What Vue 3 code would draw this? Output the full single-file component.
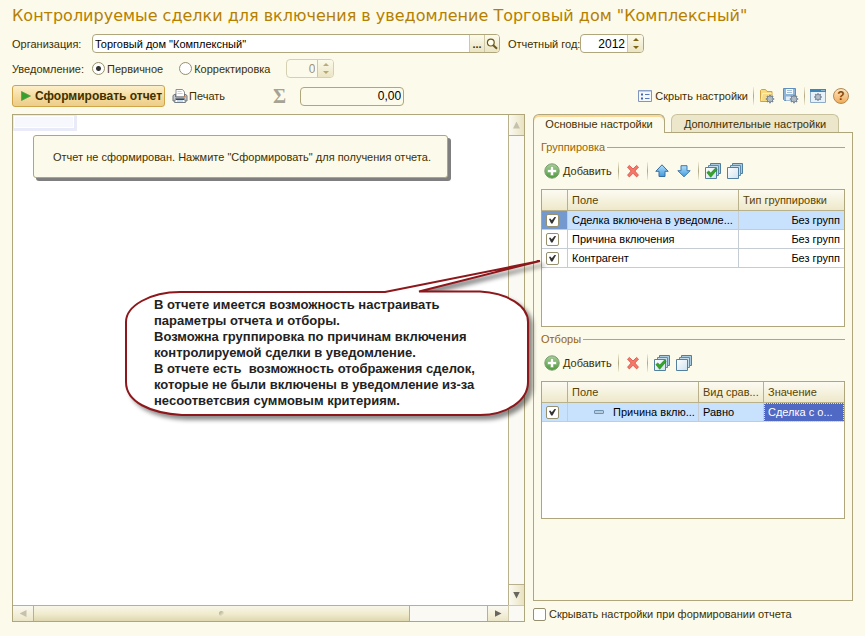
<script setup>
import { ref } from 'vue'

const organization = ref('Торговый дом "Комплексный"')
const year = ref('2012')
const noticeKind = ref('primary')
const correctionNumber = ref('0')
const total = ref('0,00')
const hideSettings = ref(false)

const groups = ref([
  { on: true, field: 'Сделка включена в уведомле...', type: 'Без групп' },
  { on: true, field: 'Причина включения', type: 'Без групп' },
  { on: true, field: 'Контрагент', type: 'Без групп' },
])
const filters = ref([
  { on: true, field: 'Причина вклю...', compare: 'Равно', value: 'Сделка с о...' },
])
</script>

<template>
  <svg class="sprite" aria-hidden="true">
    <defs>
      <linearGradient id="gGreen" x1="0" y1="0" x2="0" y2="1">
        <stop offset="0" stop-color="#a9cf9b" /><stop offset="1" stop-color="#4c9a3a" />
      </linearGradient>
      <linearGradient id="gBlue" x1="0" y1="0" x2="0" y2="1">
        <stop offset="0" stop-color="#b4e0fb" /><stop offset="1" stop-color="#3f9ade" />
      </linearGradient>
      <linearGradient id="gPage" x1="0" y1="0" x2="1" y2="1">
        <stop offset="0" stop-color="#ffffff" /><stop offset="1" stop-color="#cfe2ef" />
      </linearGradient>
      <symbol id="add" viewBox="0 0 16 16">
        <circle cx="8" cy="8" r="7.2" fill="url(#gGreen)" stroke="#7d9c72" />
        <path d="M6.5 3.5h3v3h3v3h-3v3h-3v-3h-3v-3h3z" fill="#fff" stroke="#6aa55a" stroke-width=".5" />
      </symbol>
      <symbol id="remove" viewBox="0 0 16 16">
        <path d="M2.5 4.2 4.4 2.4 8 6l3.6-3.6 1.9 1.8L9.9 8l3.6 4.2-1.9 1.7L8 10.2l-3.6 3.7-1.9-1.7L6.1 8z" fill="#f4776a" stroke="#d94f42" stroke-width=".8" />
      </symbol>
      <symbol id="up" viewBox="0 0 16 16">
        <path d="M8 1.8 14.2 8.3H11v5.2H5V8.3H1.8z" fill="url(#gBlue)" stroke="#3b6f9f" stroke-linejoin="round" />
      </symbol>
      <symbol id="down" viewBox="0 0 16 16">
        <path d="M8 13.8 14.2 7.7H11v-5H5v5H1.8z" fill="url(#gBlue)" stroke="#3f78ab" stroke-linejoin="round" />
      </symbol>
      <symbol id="pages" viewBox="0 0 16 16">
        <path d="M5.5.5h10v10h-10z" fill="#a9cbe0" stroke="#4f7f9f" />
        <path d="M3.5 2.5h10v10h-10z" fill="#c4dcea" stroke="#5f8cab" />
        <path d="M.5 4.5h11v11H.5z" fill="url(#gPage)" stroke="#54809f" />
      </symbol>
      <symbol id="pagesCheck" viewBox="0 0 16 16">
        <use href="#pages" />
        <path d="m1.8 9.6 2-1.7 1.9 2.2 4.8-5 1.5 1.6-6.3 7.6z" fill="#35a52a" stroke="#1f7f1d" stroke-width=".6" />
      </symbol>
      <symbol id="gear" viewBox="0 0 10 10">
        <path d="M5 .8v8.4M.8 5h8.4M2 2l6 6M8 2 2 8" stroke="#72808f" stroke-width="1.7" />
        <circle cx="5" cy="5" r="3" fill="#b9c3ce" stroke="#78889a" />
        <circle cx="5" cy="5" r="1.1" fill="#fff" stroke="#77818c" stroke-width=".6" />
      </symbol>
      <symbol id="list" viewBox="0 0 14 14">
        <path d="M.5 1.5h13v11H.5z" fill="#f4f8fd" stroke="#8096bd" />
        <path d="M1 2.2h12" stroke="#a9bce0" />
        <path d="M3 4.5h2v2H3zM3 8.5h2v2H3z" fill="#3f66ac" />
        <path d="M7 5.5h4.5M7 9.5h4.5" stroke="#5577b5" />
      </symbol>
      <symbol id="folder" viewBox="0 0 16 16">
        <path d="M1.5 13.5v-11l1-1h4l1.5 2h5v10z" fill="#f7da82" stroke="#cfa343" />
        <path d="m2 12.5 1.5-7h9" fill="none" stroke="#fff0b8" />
        <use href="#gear" x="6" y="6" width="10" height="10" />
      </symbol>
      <symbol id="save" viewBox="0 0 16 16">
        <path d="M.5.5h12v12h-11l-1-1z" fill="#8fb5d8" stroke="#5f90bd" />
        <path d="M3 1h7v5H3z" fill="#f3f8fc" />
        <path d="M4 2.5h5M4 4.5h5" stroke="#a5bfd5" />
        <path d="M3 8.5h6v4H3z" fill="#e6edf3" />
        <use href="#gear" x="6" y="6" width="10" height="10" />
      </symbol>
      <symbol id="window" viewBox="0 0 16 16">
        <path d="M.5 1.5h15v13H.5z" fill="#e6f1fa" stroke="#8eacc7" />
        <path d="M0 1h16v3H0z" fill="#3d87b8" />
        <path d="M11.5 2.5h1M13.5 2.5h1" stroke="#d7ebf7" />
        <use href="#gear" x="3.5" y="4.5" width="9" height="9" />
      </symbol>
      <symbol id="printer" viewBox="0 0 16 16">
        <path d="M4 1.5h6.5L12.5 4v5H4z" fill="#fff" stroke="#8d9298" />
        <path d="M5.5 3.5h4M5.5 5.5h5" stroke="#b9c3cc" stroke-width=".8" />
        <path d="M1 7.5 3.5 6v3h9V6L15 7.5v5.5H1z" fill="#c9ced3" stroke="#6d747b" />
        <path d="M3.5 10.5h9l1 4h-11z" fill="#fff" stroke="#767c83" />
        <path d="M4 11.5h8" stroke="#3f454b" />
        <path d="M12 8.8h2" stroke="#e7823c" />
        <path d="M5 13h6" stroke="#8bbbe0" />
      </symbol>
      <symbol id="lens" viewBox="0 0 12 12">
        <circle cx="4.8" cy="4.6" r="3.4" fill="#fffdf0" stroke="#6d5a1b" stroke-width="1.2" />
        <path d="m7.3 7.2 3.7 3.6" stroke="#6d5a1b" stroke-width="2" />
      </symbol>
    </defs>
  </svg>

  <main class="page">
    <h1 class="title">Контролируемые сделки для включения в уведомление Торговый дом "Комплексный"</h1>

    <div class="row">
      <label class="caption" for="org">Организация:</label>
      <div class="field org">
        <input id="org" v-model="organization" type="text" />
        <button type="button" class="in-btn dots" aria-label="Выбрать">...</button>
        <button type="button" class="in-btn" aria-label="Открыть"><svg class="lens"><use href="#lens" /></svg></button>
      </div>
      <label class="year-caption" for="year">Отчетный год:</label>
      <div class="field year">
        <input id="year" v-model="year" type="text" inputmode="numeric" />
        <span class="spin">
          <button type="button" aria-label="Больше"><i class="tri up"></i></button>
          <button type="button" aria-label="Меньше"><i class="tri down"></i></button>
        </span>
      </div>
    </div>

    <div class="row kinds">
      <span class="caption">Уведомление:</span>
      <label class="radio"><input v-model="noticeKind" type="radio" name="kind" value="primary" />Первичное</label>
      <label class="radio"><input v-model="noticeKind" type="radio" name="kind" value="correction" />Корректировка</label>
      <div class="field number off">
        <input v-model="correctionNumber" type="text" disabled aria-label="Номер корректировки" />
        <span class="spin">
          <button type="button" disabled aria-label="Больше"><i class="tri up"></i></button>
          <button type="button" disabled aria-label="Меньше"><i class="tri down"></i></button>
        </span>
      </div>
    </div>

    <div class="row commands">
      <button type="button" class="primary">
        <svg class="play" viewBox="0 0 10 10"><path d="M.5.5v9L9.5 5z" fill="#35a02c" stroke="#5c9c50" stroke-width=".8" /></svg>
        Сформировать отчет
      </button>
      <button type="button" class="flat print"><svg class="icon"><use href="#printer" /></svg>Печать</button>
      <label class="sigma" for="sum" aria-label="Сумма">Σ</label>
      <div class="field sum"><input id="sum" v-model="total" type="text" readonly /></div>
      <div class="right-tools">
        <button type="button" class="flat hide"><svg class="icon small"><use href="#list" /></svg>Скрыть настройки</button>
        <i class="sep"></i>
        <button type="button" class="flat" aria-label="Выбрать вариант"><svg class="icon"><use href="#folder" /></svg></button>
        <button type="button" class="flat save" aria-label="Сохранить вариант"><svg class="icon"><use href="#save" /></svg></button>
        <i class="sep"></i>
        <button type="button" class="flat" aria-label="Настройка"><svg class="icon"><use href="#window" /></svg></button>
        <button type="button" class="help" aria-label="Справка">?</button>
      </div>
    </div>

    <div class="workspace">
      <section class="report">
        <div class="sheet">
          <div class="cell"></div>
          <p class="message">Отчет не сформирован. Нажмите "Сформировать" для получения отчета.</p>
        </div>
        <div class="vbar">
          <button type="button" class="sb top" aria-label="Вверх"><i class="arr n off-arr"></i></button>
          <button type="button" class="sb bottom" aria-label="Вниз"><i class="arr s"></i></button>
        </div>
        <div class="hbar">
          <button type="button" class="sb left" aria-label="Влево"><i class="arr w off-arr"></i></button>
          <div class="track"><div class="thumb"><i></i></div></div>
          <button type="button" class="sb right" aria-label="Вправо"><i class="arr e"></i></button>
        </div>
        <div class="corner"></div>
      </section>

      <section class="settings">
        <div class="tabs" role="tablist">
          <button type="button" role="tab" class="tab active" aria-selected="true">Основные настройки</button>
          <button type="button" role="tab" class="tab" aria-selected="false">Дополнительные настройки</button>
        </div>
        <div class="panel">
          <h2 class="legend">Группировка</h2>
          <div class="toolbar">
            <button type="button" class="flat"><svg class="icon"><use href="#add" /></svg>Добавить</button>
            <i class="sep"></i>
            <button type="button" class="flat" aria-label="Удалить"><svg class="icon"><use href="#remove" /></svg></button>
            <i class="sep"></i>
            <button type="button" class="flat" aria-label="Переместить вверх"><svg class="icon"><use href="#up" /></svg></button>
            <button type="button" class="flat" aria-label="Переместить вниз"><svg class="icon"><use href="#down" /></svg></button>
            <i class="sep"></i>
            <button type="button" class="flat" aria-label="Установить флажки"><svg class="icon"><use href="#pagesCheck" /></svg></button>
            <button type="button" class="flat" aria-label="Снять флажки"><svg class="icon"><use href="#pages" /></svg></button>
          </div>
          <div class="grid-box">
            <table>
              <colgroup><col class="c-check" /><col /><col class="c-type" /></colgroup>
              <thead><tr><th></th><th>Поле</th><th>Тип группировки</th></tr></thead>
              <tbody>
                <tr v-for="(g, i) in groups" :key="g.field" :class="{ selected: i === 0 }">
                  <td class="tick" :class="{ current: i === 0 }"><input v-model="g.on" type="checkbox" :aria-label="g.field" /></td>
                  <td>{{ g.field }}</td>
                  <td class="num">{{ g.type }}</td>
                </tr>
              </tbody>
            </table>
          </div>

          <h2 class="legend second">Отборы</h2>
          <div class="toolbar">
            <button type="button" class="flat"><svg class="icon"><use href="#add" /></svg>Добавить</button>
            <i class="sep"></i>
            <button type="button" class="flat" aria-label="Удалить"><svg class="icon"><use href="#remove" /></svg></button>
            <i class="sep"></i>
            <button type="button" class="flat" aria-label="Установить флажки"><svg class="icon"><use href="#pagesCheck" /></svg></button>
            <button type="button" class="flat" aria-label="Снять флажки"><svg class="icon"><use href="#pages" /></svg></button>
          </div>
          <div class="grid-box">
            <table>
              <colgroup><col class="c-check" /><col /><col class="c-compare" /><col class="c-value" /></colgroup>
              <thead><tr><th></th><th>Поле</th><th>Вид срав...</th><th>Значение</th></tr></thead>
              <tbody>
                <tr v-for="f in filters" :key="f.field" class="selected">
                  <td class="tick"><input v-model="f.on" type="checkbox" :aria-label="f.field" /></td>
                  <td class="nested"><i class="dash"></i>{{ f.field }}</td>
                  <td>{{ f.compare }}</td>
                  <td class="focus">{{ f.value }}</td>
                </tr>
              </tbody>
            </table>
          </div>
        </div>
        <label class="hide-check"><input v-model="hideSettings" type="checkbox" />Скрывать настройки при формировании отчета</label>
      </section>

      <aside class="callout">
        <svg class="bubble" viewBox="0 0 430 170" aria-hidden="true">
          <path d="M60 38H265L420 7 299 37.500H360C388 39 408 52 408 68V128C408 147 386 161 360 161H62C30 159 6 148 6 128V68C6 52 30 38 60 38Z" />
        </svg>
        <p>В отчете имеется возможность настраивать<br />параметры отчета и отборы.<br />Возможна группировка по причинам включения<br />контролируемой сделки в уведомление.<br />В отчете есть&nbsp; возможность отображения сделок,<br />которые не были включены в уведомление из-за<br />несоответсвия суммовым критериям.</p>
      </aside>
    </div>
  </main>
</template>

<style>
body {
  background: #fcfaeb;
}
</style>

<style scoped>
.page {
  box-sizing: border-box;
  min-height: 100vh;
  display: flex;
  flex-direction: column;
  padding: 4px 12px 14px;
  color: #403000;
  font: 11px/16px "Liberation Sans", Arial, sans-serif;
}
.sprite {
  position: absolute;
  width: 0;
  height: 0;
}
button,
input {
  box-sizing: border-box;
  margin: 0;
  padding: 0;
  border: 0;
  background: none;
  color: inherit;
  font: inherit;
}
svg {
  display: block;
  flex: none;
}
.title {
  margin: 0;
  color: #b58000;
  font: 16px/24px "DejaVu Sans", Verdana, sans-serif;
  white-space: nowrap;
}
.row {
  display: flex;
  align-items: center;
  height: 19px;
  margin-top: 6px;
  white-space: nowrap;
}
.caption {
  width: 80px;
}
.field {
  box-sizing: border-box;
  display: flex;
  height: 19px;
  border: 1px solid #b0a67c;
  border-radius: 4px;
  background: #fff;
  overflow: hidden;
}
.field input {
  flex: 1;
  min-width: 0;
  padding: 0 2px;
  color: #000;
}
.org {
  flex: 0 1 408px;
}
.in-btn {
  display: flex;
  align-items: center;
  justify-content: center;
  width: 15px;
  border-left: 1px solid #cfc8a4;
  background: linear-gradient(#fcfaeb, #ebe5c4);
}
.dots {
  font-weight: bold;
}
.lens {
  width: 12px;
  height: 12px;
}
.year-caption {
  width: 72px;
  margin-left: 8px;
}
.year {
  width: 64px;
}
.year input,
.number input,
.sum input {
  font-size: 12px;
  text-align: right;
}
.spin {
  display: flex;
  flex-direction: column;
  width: 15px;
  border-left: 1px solid #cfc8a4;
  background: linear-gradient(#fcfaeb, #ebe5c4);
}
.spin button {
  flex: 1;
  display: flex;
  align-items: center;
  justify-content: center;
}
.tri {
  border: 3px solid transparent;
}
.tri.up {
  border-top: 0;
  border-bottom-color: #7d6512;
}
.tri.down {
  border-bottom: 0;
  border-top-color: #7d6512;
}
.radio {
  display: flex;
  align-items: center;
  gap: 2px;
  margin-right: 16px;
}
.radio input {
  appearance: none;
  width: 13px;
  height: 13px;
  border: 1px solid #97906e;
  border-radius: 50%;
  background: #fff;
}
.radio input:checked {
  background: radial-gradient(circle, #333 0 2px, #fff 3px);
}
.number {
  width: 48px;
}
.off {
  border-color: #d6d0b2;
  background: #fcfaeb;
}
.off input {
  color: #999480;
}
.off .tri {
  opacity: 0.5;
}
.commands {
  height: 22px;
  margin-top: 7px;
}
.primary {
  display: flex;
  align-items: center;
  gap: 4px;
  width: 153px;
  height: 22px;
  padding-left: 8px;
  border: 1px solid #d0a548;
  border-radius: 3px;
  background: linear-gradient(#fcefcb, #f3d999 60%, #ecce8b);
  font-size: 12px;
  font-weight: bold;
  white-space: nowrap;
}
.play {
  width: 10px;
  height: 10px;
}
.flat {
  display: flex;
  align-items: center;
  gap: 3px;
}
.icon {
  width: 16px;
  height: 16px;
}
.icon.small {
  width: 14px;
  height: 14px;
}
.print {
  gap: 1px;
  margin-left: 7px;
}
.sigma {
  margin-left: 48px;
  color: #a6a294;
  font: bold 20px/20px "Liberation Serif", serif;
}
.sum {
  width: 104px;
  margin-left: 14px;
  background: #fcfaeb;
}
.right-tools {
  display: flex;
  align-items: center;
  gap: 5px;
  margin-left: auto;
  padding-right: 4px;
}
.save {
  margin-left: 3px;
}
.sep {
  width: 1px;
  height: 18px;
  background: linear-gradient(#f3efd8, #aea885, #f3efd8);
}
.help {
  width: 16px;
  height: 16px;
  margin-left: 2px;
  border: 1px solid #b28a55;
  border-radius: 50%;
  background: linear-gradient(#fde5c2, #f2ac58);
  color: #7b4a12;
  font: bold 12px/14px "Liberation Sans", sans-serif;
}
.workspace {
  position: relative;
  flex: 1;
  display: flex;
  gap: 8px;
  margin-top: 7px;
}
.report {
  flex: 1;
  min-width: 0;
  display: grid;
  grid-template: 1fr 16px / 1fr 16px;
  border: 1px solid #b0a67c;
  background: #fff;
}
.sheet {
  overflow: hidden;
}
.cell {
  box-sizing: border-box;
  width: 64px;
  height: 16px;
  border: solid #e9ebf8;
  border-width: 1px 3px 3px 1px;
  background: #f7f8fd;
  box-shadow: inset 0 0 0 1px #fff;
}
.message {
  box-sizing: border-box;
  width: fit-content;
  margin: 4px 20px;
  padding: 13px 16px 12px 19px;
  border: 1px solid #b0a67c;
  border-radius: 3px;
  background: #fcfaeb;
  box-shadow: 3px 3px 0 #7f7f7f;
  white-space: nowrap;
}
.vbar {
  display: flex;
  flex-direction: column;
  justify-content: space-between;
  border-left: 1px solid #b9b18c;
  background: #faf9f4;
}
.hbar {
  display: flex;
  border-top: 1px solid #b9b18c;
  background: #faf9f4;
}
.corner {
  border-top: 1px solid #d0caac;
  border-left: 1px solid #d0caac;
  background: #faf9f4;
}
.sb {
  display: flex;
  align-items: center;
  justify-content: center;
  background: linear-gradient(#fbfaf2, #ebe5c6);
}
.top,
.bottom {
  height: 21px;
  background: linear-gradient(90deg, #fbfaf2, #e9e2c0);
}
.top {
  border-bottom: 1px solid #b9b18c;
}
.bottom {
  border-top: 1px solid #b9b18c;
}
.left,
.right {
  width: 21px;
}
.left {
  border-right: 1px solid #b9b18c;
}
.right {
  border-left: 1px solid #b9b18c;
}
.arr {
  width: 7px;
  height: 7px;
  background: #686560;
}
.off-arr {
  background: #c6c1ac;
}
.n {
  clip-path: polygon(50% 0, 100% 100%, 0 100%);
}
.s {
  clip-path: polygon(0 0, 100% 0, 50% 100%);
}
.w {
  clip-path: polygon(0 50%, 100% 0, 100% 100%);
}
.e {
  clip-path: polygon(0 0, 100% 50%, 0 100%);
}
.track {
  flex: 1;
}
.thumb {
  box-sizing: border-box;
  display: flex;
  align-items: center;
  justify-content: center;
  width: 83%;
  height: 100%;
  border-right: 1px solid #b9b18c;
  background: linear-gradient(#f8f6e8, #f0ebcd 55%, #ded6ae);
}
.thumb i {
  width: 5px;
  height: 5px;
  border-radius: 50%;
  background: linear-gradient(135deg, #aaa37c, #faf8e8);
}
.settings {
  width: 320px;
  display: flex;
  flex-direction: column;
}
.tabs {
  display: flex;
  gap: 6px;
  height: 19px;
}
.tab {
  box-sizing: border-box;
  width: 168px;
  height: 18px;
  border: 1px solid #c9c19c;
  border-bottom: 0;
  border-radius: 6px 6px 0 0;
  background: #ece6cb;
  line-height: 18px;
  white-space: nowrap;
}
.tab.active {
  position: relative;
  width: 132px;
  height: 19px;
  border-color: #b0a67c;
  background: #fcfaeb;
  box-shadow: inset 0 2px #fbd99a;
}
.panel {
  flex: 1;
  padding: 6px 7px 8px;
  border: 1px solid #b0a67c;
  margin-top: -1px;
}
.legend {
  display: flex;
  align-items: center;
  gap: 2px;
  margin: 0;
  color: #9a6500;
  font: inherit;
}
.legend::after {
  content: "";
  flex: 1;
  height: 1px;
  background: #b0a67c;
}
.second {
  margin-top: 4px;
}
.toolbar {
  display: flex;
  align-items: center;
  gap: 6px;
  height: 18px;
  margin: 7px 0 9px;
  padding-left: 3px;
}
.grid-box {
  box-sizing: border-box;
  min-height: 138px;
  border: 1px solid #b0a67c;
  background: #fff;
}
table {
  width: 100%;
  table-layout: fixed;
  border-collapse: separate;
  border-spacing: 0;
}
.c-check {
  width: 26px;
}
.c-type {
  width: 105px;
}
.c-compare {
  width: 65px;
}
.c-value {
  width: 80px;
}
th,
td {
  box-sizing: border-box;
  padding: 0 0 0 4px;
  border-right: 1px solid #c5ccd4;
  border-bottom: 1px solid #c5ccd4;
  overflow: hidden;
  text-overflow: ellipsis;
  white-space: nowrap;
}
th {
  height: 21px;
  border-color: #b9b18c;
  background: linear-gradient(#fcfbf2, #eee8cb);
  color: #5a4300;
  font-weight: normal;
  text-align: left;
}
td {
  height: 19px;
  color: #000;
}
th:last-child,
td:last-child {
  border-right: 0;
}
.selected td {
  background: #c8e1fd;
}
.selected td.current {
  background: #7399cf;
}
td.num {
  padding-right: 4px;
  text-align: right;
}
.selected td.focus {
  outline: 1px dotted #c8e1fd;
  outline-offset: -1px;
  background: #4f69c4;
  color: #fff;
}
.tick {
  text-overflow: clip;
}
input[type="checkbox"] {
  appearance: none;
  display: grid;
  place-items: center;
  width: 13px;
  height: 13px;
  border: 1px solid #97906e;
  border-radius: 2px;
  background: #fff;
}
input[type="checkbox"]:checked::after {
  content: "";
  width: 7px;
  height: 7px;
  background: #333;
  clip-path: polygon(0 35%, 18% 30%, 40% 55%, 85% 0, 100% 10%, 50% 100%, 30% 100%);
}
td.nested {
  padding-left: 26px;
}
.dash {
  display: inline-block;
  box-sizing: border-box;
  width: 10px;
  height: 4px;
  margin-right: 9px;
  border: 1px solid #6f93ae;
  border-radius: 1px;
  background: #b5cfe0;
  vertical-align: 2px;
}
.hide-check {
  display: flex;
  align-items: center;
  gap: 3px;
  margin-top: 5px;
  white-space: nowrap;
}
.callout {
  position: absolute;
  left: 108px;
  top: 140px;
  width: 430px;
}
.bubble {
  width: 430px;
  height: 170px;
  overflow: visible;
  filter: drop-shadow(4px 4px 2px rgba(0, 0, 0, 0.45));
}
.bubble path {
  fill: #fff;
  stroke: #8d171b;
  stroke-width: 2;
}
.callout p {
  position: absolute;
  left: 34px;
  top: 43px;
  margin: 0;
  color: #222;
  font: bold 13px/16px "Liberation Sans", Arial, sans-serif;
  white-space: nowrap;
}
</style>
